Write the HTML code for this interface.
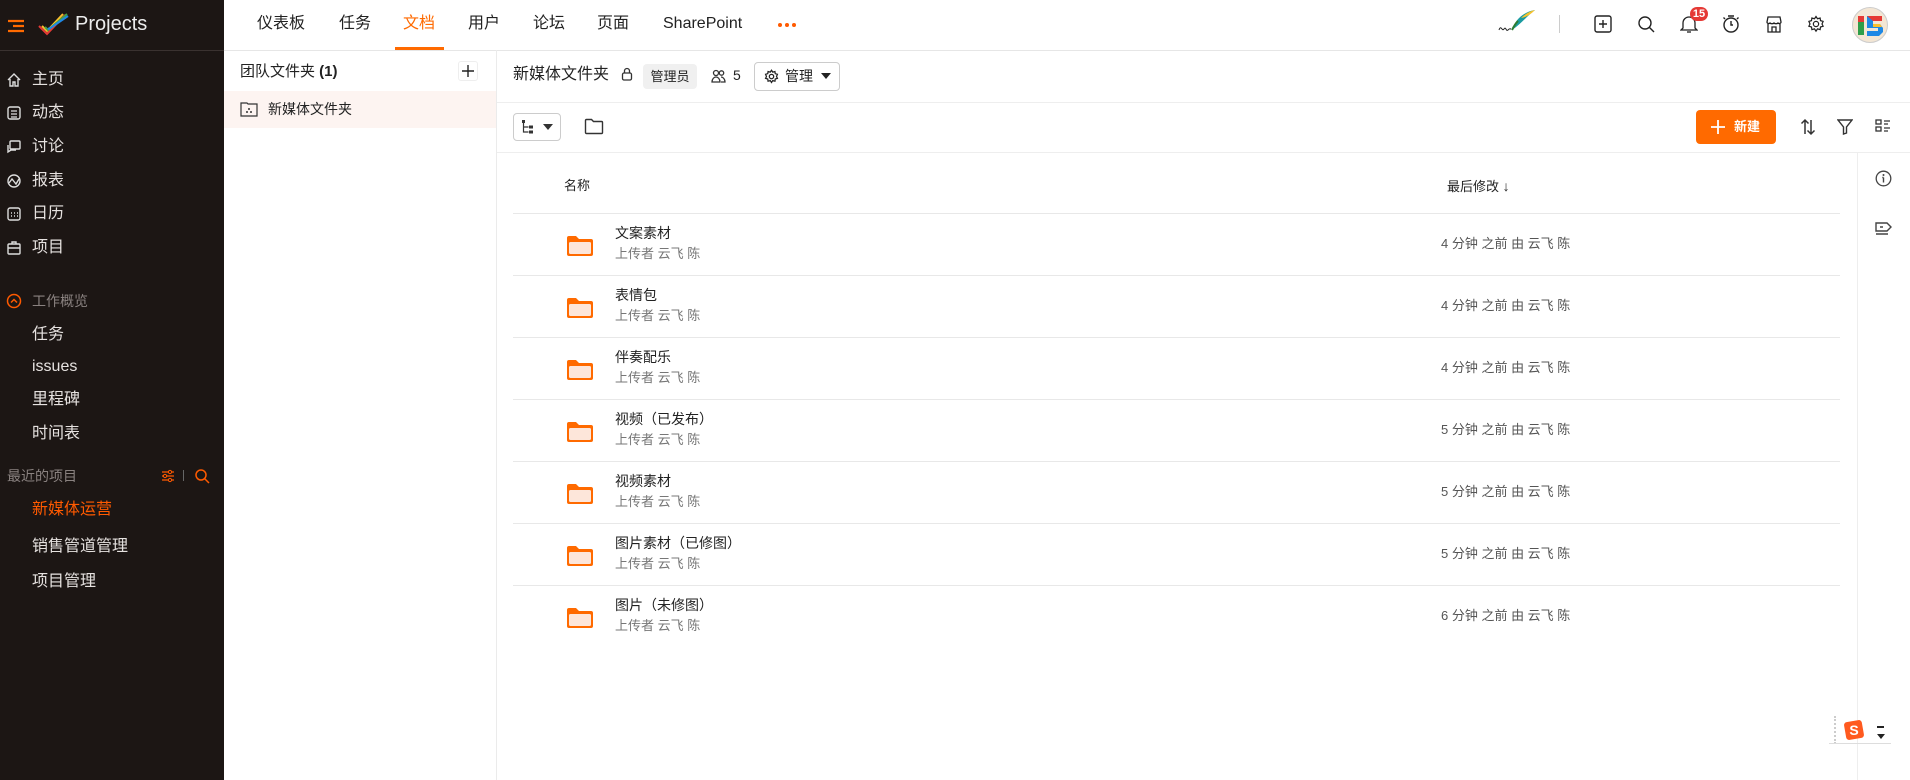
<!DOCTYPE html>
<html><head><meta charset="utf-8">
<style>
*{margin:0;padding:0;box-sizing:border-box}
body{width:1910px;height:780px;overflow:hidden;background:#fff;font-family:"Liberation Sans","Noto Sans CJK SC",sans-serif;color:#222;position:relative}
.a{position:absolute;white-space:nowrap;line-height:20px}
#side{position:absolute;left:0;top:0;width:224px;height:780px;background:#1c1614;color:#e8e4e2}
#side .sep{position:absolute;left:0;top:50px;width:224px;height:1px;background:#3a3230}
.nav{font-size:16px;color:#e6e2e0}
.nav svg{position:absolute;left:-26px;top:2px}
.top{font-size:16px;color:#222;top:14px}
.ic{position:absolute}
.row-b{position:absolute;left:513px;width:1327px;height:1px;background:#e8e8e8}
.nm{font-size:14px;color:#222}
.sb{font-size:13px;color:#777}
.tm{font-size:13px;color:#555}
</style></head><body>
<div id="side">
  <svg class="ic" style="left:7px;top:19px" width="18" height="14"><path d="M1 2h16M6 7h11M1 12h16" stroke="#ff6a00" stroke-width="2.2"/></svg>
  <svg class="ic" style="left:37px;top:12px" width="32" height="26" viewBox="0 0 32 26"><path d="M2 14l8 8L28 3" fill="none" stroke="#e53935" stroke-width="2"/><path d="M5 14l5 5L26 2" fill="none" stroke="#fbc02d" stroke-width="2"/><path d="M8 15l3 3L30 2" fill="none" stroke="#43a047" stroke-width="2"/><path d="M11 16l1 1L31 4" fill="none" stroke="#1e88e5" stroke-width="2"/></svg>
  <div class="a" style="left:75px;top:14px;font-size:20px;color:#ececec">Projects</div>
  <div class="sep"></div>
  <div class="a nav" style="left:32px;top:70px"><svg width="16" height="16"><path d="M2 8L8 2l6 6M4 7v7h3v-4h2v4h3V7" fill="none" stroke="#ddd" stroke-width="1.4"/></svg>主页</div>
  <div class="a nav" style="left:32px;top:103px"><svg width="16" height="16"><rect x="2" y="2" width="12" height="12" rx="2" fill="none" stroke="#ddd" stroke-width="1.4"/><path d="M5 6h6M5 9h6M5 12h6" stroke="#ddd" stroke-width="1.2"/></svg>动态</div>
  <div class="a nav" style="left:32px;top:137px"><svg width="16" height="16"><rect x="4" y="2" width="10" height="8" rx="1" fill="none" stroke="#ddd" stroke-width="1.4"/><path d="M2 6v7l3-2h5" fill="none" stroke="#ddd" stroke-width="1.4"/></svg>讨论</div>
  <div class="a nav" style="left:32px;top:171px"><svg width="16" height="16"><circle cx="8" cy="8" r="6" fill="none" stroke="#ddd" stroke-width="1.4"/><path d="M3 10l3-4 4 5 3-5" fill="none" stroke="#ddd" stroke-width="1.4"/></svg>报表</div>
  <div class="a nav" style="left:32px;top:204px"><svg width="16" height="16"><rect x="2" y="2" width="12" height="12" rx="2" fill="none" stroke="#ddd" stroke-width="1.4"/><path d="M5 7h1M8 7h1M11 7h1M5 10h1M8 10h1M11 10h1" stroke="#ddd" stroke-width="1.4"/></svg>日历</div>
  <div class="a nav" style="left:32px;top:238px"><svg width="16" height="16"><rect x="2" y="4" width="12" height="10" rx="1" fill="none" stroke="#ddd" stroke-width="1.4"/><path d="M6 4V2h4v2M2 8h12" fill="none" stroke="#ddd" stroke-width="1.4"/></svg>项目</div>
  <svg class="ic" style="left:6px;top:293px" width="16" height="16"><circle cx="8" cy="8" r="6.5" fill="none" stroke="#ff5a00" stroke-width="1.5"/><path d="M5 9.5l3-3 3 3" fill="none" stroke="#ff5a00" stroke-width="1.5"/></svg>
  <div class="a" style="left:32px;top:291px;font-size:14px;color:#8a8280">工作概览</div>
  <div class="a nav" style="left:32px;top:325px">任务</div>
  <div class="a nav" style="left:32px;top:357px">issues</div>
  <div class="a nav" style="left:32px;top:390px">里程碑</div>
  <div class="a nav" style="left:32px;top:424px">时间表</div>
  <div class="a" style="left:7px;top:466px;font-size:14px;color:#8a8280">最近的项目</div>
  <svg class="ic" style="left:160px;top:468px" width="16" height="16"><path d="M2 4h12M2 8h12M2 12h12" stroke="#ff5a00" stroke-width="1.3"/><circle cx="10" cy="4" r="1.6" fill="#1c1614" stroke="#ff5a00"/><circle cx="5" cy="8" r="1.6" fill="#1c1614" stroke="#ff5a00"/><circle cx="10" cy="12" r="1.6" fill="#1c1614" stroke="#ff5a00"/></svg>
  <div class="a" style="left:183px;top:470px;width:1px;height:11px;background:#666"></div>
  <svg class="ic" style="left:194px;top:468px" width="16" height="16"><circle cx="7" cy="7" r="5" fill="none" stroke="#ff5a00" stroke-width="1.5"/><path d="M10.5 10.5L15 15" stroke="#ff5a00" stroke-width="1.5"/></svg>
  <div class="a nav" style="left:32px;top:500px;color:#ff5a00">新媒体运营</div>
  <div class="a nav" style="left:32px;top:537px">销售管道管理</div>
  <div class="a nav" style="left:32px;top:572px">项目管理</div>
</div>

<div class="a" style="left:224px;top:50px;width:1686px;height:1px;background:#e6e6e6"></div>
<div class="a top" style="left:257px">仪表板</div>
<div class="a top" style="left:339px">任务</div>
<div class="a top" style="left:403px;color:#ff6a00">文档</div>
<div class="a" style="left:395px;top:47px;width:49px;height:3px;background:#ff6a00"></div>
<div class="a top" style="left:468px">用户</div>
<div class="a top" style="left:533px">论坛</div>
<div class="a top" style="left:597px">页面</div>
<div class="a top" style="left:663px">SharePoint</div>
<svg class="ic" style="left:777px;top:22px" width="20" height="6"><circle cx="3" cy="3" r="2" fill="#ff5a00"/><circle cx="10" cy="3" r="2" fill="#ff5a00"/><circle cx="17" cy="3" r="2" fill="#ff5a00"/></svg>
<svg class="ic" style="left:1497px;top:8px" width="40" height="26" viewBox="0 0 40 26"><path d="M2 22c2-6 3 2 5-1s2 3 4 1 2-1 3-1" fill="none" stroke="#222" stroke-width="1"/><path d="M15 22C18 12 26 4 38 2 30 8 24 16 15 22z" fill="#1a9ba0"/><path d="M24 10C28 6 33 3 38 2 34 6 30 9 24 10z" fill="#f7c22d"/><path d="M15 22c2-4 4-7 6-9" stroke="#2e7d32" stroke-width="2"/></svg>
<div class="a" style="left:1559px;top:15px;width:1px;height:18px;background:#ccc"></div>
<svg class="ic" style="left:1594px;top:15px" width="18" height="18"><rect x="1" y="1" width="16" height="16" rx="2" fill="none" stroke="#222" stroke-width="1.4"/><path d="M9 5v8M5 9h8" stroke="#222" stroke-width="1.4"/></svg>
<svg class="ic" style="left:1637px;top:15px" width="18" height="18"><circle cx="8" cy="8" r="6" fill="none" stroke="#222" stroke-width="1.4"/><path d="M12.5 12.5L17 17" stroke="#222" stroke-width="1.4"/></svg>
<svg class="ic" style="left:1680px;top:14px" width="18" height="20"><path d="M3 14V9a6 6 0 0112 0v5l2 2H1z" fill="none" stroke="#222" stroke-width="1.3"/><path d="M7 18h4" stroke="#222" stroke-width="1.3"/></svg>
<div class="a" style="left:1690px;top:7px;width:18px;height:14px;border-radius:7px;background:#e53935;color:#fff;font-size:11px;font-weight:bold;text-align:center;line-height:14px">15</div>
<svg class="ic" style="left:1722px;top:14px" width="18" height="20"><circle cx="9" cy="11" r="7" fill="none" stroke="#222" stroke-width="1.4"/><path d="M6 2h6M9 7v4h2M15 5l1.5-1.5M3 5L1.5 3.5" stroke="#222" stroke-width="1.4" fill="none"/></svg>
<svg class="ic" style="left:1765px;top:15px" width="18" height="18"><path d="M2 7l1-5h12l1 5c0 1.5-2 2-3 1-1 1-3 1-4 0-1 1-3 1-4 0-1 1-3 .5-3-1zM3 9v8h12V9M7 17v-5h4v5" fill="none" stroke="#222" stroke-width="1.3"/></svg>
<svg class="ic" style="left:1807px;top:15px" width="18" height="18" viewBox="0 0 24 24"><path d="M12 2l2 3 3.5-1 .5 3.5 3.5 1-1.5 3.5 1.5 3-3.5 1-.5 3.5-3.5-1-2 3-2-3-3.5 1-.5-3.5-3.5-1 1.5-3-1.5-3.5 3.5-1 .5-3.5 3.5 1z" fill="none" stroke="#222" stroke-width="1.6"/><circle cx="12" cy="12" r="3.5" fill="none" stroke="#222" stroke-width="1.6"/></svg>
<svg class="ic" style="left:1852px;top:7px" width="36" height="36" viewBox="0 0 36 36"><circle cx="18" cy="18" r="17.5" fill="#f3e6d4" stroke="#ccc"/><rect x="6" y="9" width="6" height="19" fill="#2e9e4a"/><rect x="6" y="9" width="6" height="6" fill="#e53935"/><path d="M15 9h15v5h-9v3h7l3 4v4l-4 4H15v-5h11v-3H15z" fill="#1e88e5"/><path d="M15 9h15v5h-9z" fill="#e53935"/><path d="M21 17h7l2 3h-9z" fill="#fbc02d"/></svg>

<div class="a" style="left:496px;top:50px;width:1px;height:730px;background:#ebebeb"></div>
<div class="a" style="left:240px;top:62px;font-size:15px;color:#222">团队文件夹 <b style="font-weight:bold">(1)</b></div>
<div class="a" style="left:458px;top:61px;width:20px;height:20px;border:1px solid #eee;border-radius:3px"></div>
<svg class="ic" style="left:461px;top:64px" width="14" height="14"><path d="M7 1v12M1 7h12" stroke="#222" stroke-width="1.4"/></svg>
<div class="a" style="left:224px;top:91px;width:272px;height:37px;background:#fdf4f1"></div>
<svg class="ic" style="left:240px;top:101px" width="18" height="16"><path d="M1 2h6l1 1h9v12H1z" fill="none" stroke="#333" stroke-width="1.2"/><circle cx="9" cy="8" r="1" fill="#333"/><circle cx="7" cy="11" r="1" fill="#333"/><circle cx="11" cy="11" r="1" fill="#333"/></svg>
<div class="a" style="left:268px;top:99px;font-size:14px;color:#222">新媒体文件夹</div>

<div class="a" style="left:513px;top:65px;font-size:16px;color:#222">新媒体文件夹</div>
<svg class="ic" style="left:621px;top:67px" width="12" height="14"><rect x="1.5" y="6" width="9" height="7" rx="1.5" fill="none" stroke="#333" stroke-width="1.3"/><path d="M3.5 6V4a2.5 2.5 0 015 0v2" fill="none" stroke="#333" stroke-width="1.3"/></svg>
<div class="a" style="left:643px;top:64px;width:54px;height:25px;background:#f0f0f0;border-radius:4px;font-size:13px;line-height:25px;text-align:center;color:#222">管理员</div>
<svg class="ic" style="left:711px;top:69px" width="15" height="14"><circle cx="5" cy="4" r="2.5" fill="none" stroke="#333" stroke-width="1.3"/><circle cx="10.5" cy="4" r="2.2" fill="none" stroke="#333" stroke-width="1.3"/><path d="M1 13c0-3 2-5 4-5s4 2 4 5zM10 8c2 0 4 2 4 5h-4" fill="none" stroke="#333" stroke-width="1.3"/></svg>
<div class="a" style="left:733px;top:65px;font-size:14px;color:#222">5</div>
<div class="a" style="left:754px;top:62px;width:86px;height:29px;border:1px solid #ccc;border-radius:4px"></div>
<svg class="ic" style="left:764px;top:69px" width="15" height="15" viewBox="0 0 24 24"><path d="M12 2l2 3 3.5-1 .5 3.5 3.5 1-1.5 3.5 1.5 3-3.5 1-.5 3.5-3.5-1-2 3-2-3-3.5 1-.5-3.5-3.5-1 1.5-3-1.5-3.5 3.5-1 .5-3.5 3.5 1z" fill="none" stroke="#222" stroke-width="2"/><circle cx="12" cy="12" r="3.5" fill="none" stroke="#222" stroke-width="2"/></svg>
<div class="a" style="left:785px;top:66px;font-size:14px;color:#222">管理</div>
<svg class="ic" style="left:821px;top:73px" width="10" height="6"><path d="M0 0h10L5 6z" fill="#222"/></svg>
<div class="a" style="left:497px;top:102px;width:1413px;height:1px;background:#eee"></div>

<div class="a" style="left:513px;top:113px;width:48px;height:28px;border:1px solid #ccc;border-radius:4px"></div>
<svg class="ic" style="left:521px;top:119px" width="16" height="16"><rect x="1" y="1" width="3" height="3" fill="#333"/><path d="M2.5 4v9h5M2.5 8h5" stroke="#333" stroke-width="1.2" fill="none"/><rect x="8" y="6.5" width="4" height="3" fill="#333"/><rect x="8" y="11.5" width="4" height="3" fill="#333"/></svg>
<svg class="ic" style="left:543px;top:124px" width="10" height="6"><path d="M0 0h10L5 6z" fill="#333"/></svg>
<svg class="ic" style="left:584px;top:118px" width="20" height="17"><path d="M1.5 2.5a1 1 0 011-1h5l2 2h8a1 1 0 011 1v10a1 1 0 01-1 1h-15a1 1 0 01-1-1z" fill="none" stroke="#333" stroke-width="1.4"/></svg>
<div class="a" style="left:1696px;top:110px;width:80px;height:34px;background:#ff6a00;border-radius:4px"></div>
<svg class="ic" style="left:1710px;top:119px" width="16" height="16"><path d="M8 1v14M1 8h14" stroke="#fff" stroke-width="1.8"/></svg>
<div class="a" style="left:1734px;top:117px;font-size:13px;color:#fff;font-weight:bold">新建</div>
<svg class="ic" style="left:1800px;top:118px" width="16" height="18"><path d="M5 16V2M1.5 5.5L5 2l3.5 3.5M11 2v14M7.5 12.5L11 16l3.5-3.5" fill="none" stroke="#333" stroke-width="1.5"/></svg>
<svg class="ic" style="left:1837px;top:118px" width="16" height="17"><path d="M1 2h14l-5.5 7v6l-3 1V9z" fill="none" stroke="#333" stroke-width="1.4"/></svg>
<svg class="ic" style="left:1875px;top:118px" width="16" height="16"><rect x="1" y="2" width="5" height="4" fill="none" stroke="#333" stroke-width="1.3"/><rect x="1" y="9" width="5" height="4" fill="none" stroke="#333" stroke-width="1.3"/><path d="M9 3h6M9 6h4M9 10h6M9 13h4" stroke="#333" stroke-width="1.3"/></svg>
<div class="a" style="left:497px;top:152px;width:1413px;height:1px;background:#eee"></div>
<div class="a" style="left:1857px;top:153px;width:1px;height:627px;background:#eee"></div>
<svg class="ic" style="left:1875px;top:170px" width="17" height="17"><circle cx="8.5" cy="8.5" r="7.3" fill="none" stroke="#444" stroke-width="1.3"/><path d="M8.5 7.5v5M7.3 7.5h1.2" stroke="#444" stroke-width="1.4"/><circle cx="8.5" cy="5" r="1" fill="#444"/></svg>
<svg class="ic" style="left:1874px;top:221px" width="18" height="15"><path d="M2 2h11l4 4-4 4H2z" fill="none" stroke="#444" stroke-width="1.4"/><path d="M2 13h12M6 6h3" stroke="#444" stroke-width="1.4"/></svg>

<div class="a" style="left:564px;top:176px;font-size:13px;color:#222">名称</div>
<div class="a" style="left:1447px;top:176px;font-size:13px;color:#222">最后修改 <span style="font-size:14px">↓</span></div>
<div class="row-b" style="top:213px"></div>

<div id="rows"></div>
<script>
var d=[["文案素材","4"],["表情包","4"],["伴奏配乐","4"],["视频（已发布）","5"],["视频素材","5"],["图片素材（已修图）","5"],["图片（未修图）","6"]];
var h="";
d.forEach(function(r,i){var t=213+i*62;
h+='<svg class="ic" style="left:566px;top:'+(t+22)+'px" width="28" height="22"><path d="M1 3a2 2 0 012-2h7l3 3h12a2 2 0 012 2v13a2 2 0 01-2 2H3a2 2 0 01-2-2z" fill="#ff6a00"/><rect x="3" y="7" width="22" height="12" rx="1.5" fill="#fde6da"/></svg>';
h+='<div class="a nm" style="left:615px;top:'+(t+10)+'px">'+r[0]+'</div>';
h+='<div class="a sb" style="left:615px;top:'+(t+31)+'px">上传者 云飞 陈</div>';
h+='<div class="a tm" style="left:1441px;top:'+(t+21)+'px">'+r[1]+' 分钟 之前 由 云飞 陈</div>';
if(i<6)h+='<div class="row-b" style="top:'+(t+62)+'px"></div>';});
document.getElementById("rows").innerHTML=h;
</script>

<div class="a" style="left:1834px;top:716px;width:1px;height:28px;border-left:2px dotted #ccc"></div>
<div class="a" style="left:1829px;top:743px;width:62px;height:1px;background:#ddd"></div>
<svg class="ic" style="left:1843px;top:719px" width="22" height="22"><rect x="2" y="2" width="18" height="18" rx="3" fill="#ff5a1f" transform="rotate(-10 11 11)"/><text x="11" y="16" font-size="14" font-weight="bold" fill="#fff" text-anchor="middle" font-family="Liberation Sans">S</text></svg>
<div class="a" style="left:1877px;top:726px;width:7px;height:2px;background:#222"></div>
<svg class="ic" style="left:1877px;top:734px" width="8" height="5"><path d="M0 0h8L4 5z" fill="#222"/></svg>
</body></html>
